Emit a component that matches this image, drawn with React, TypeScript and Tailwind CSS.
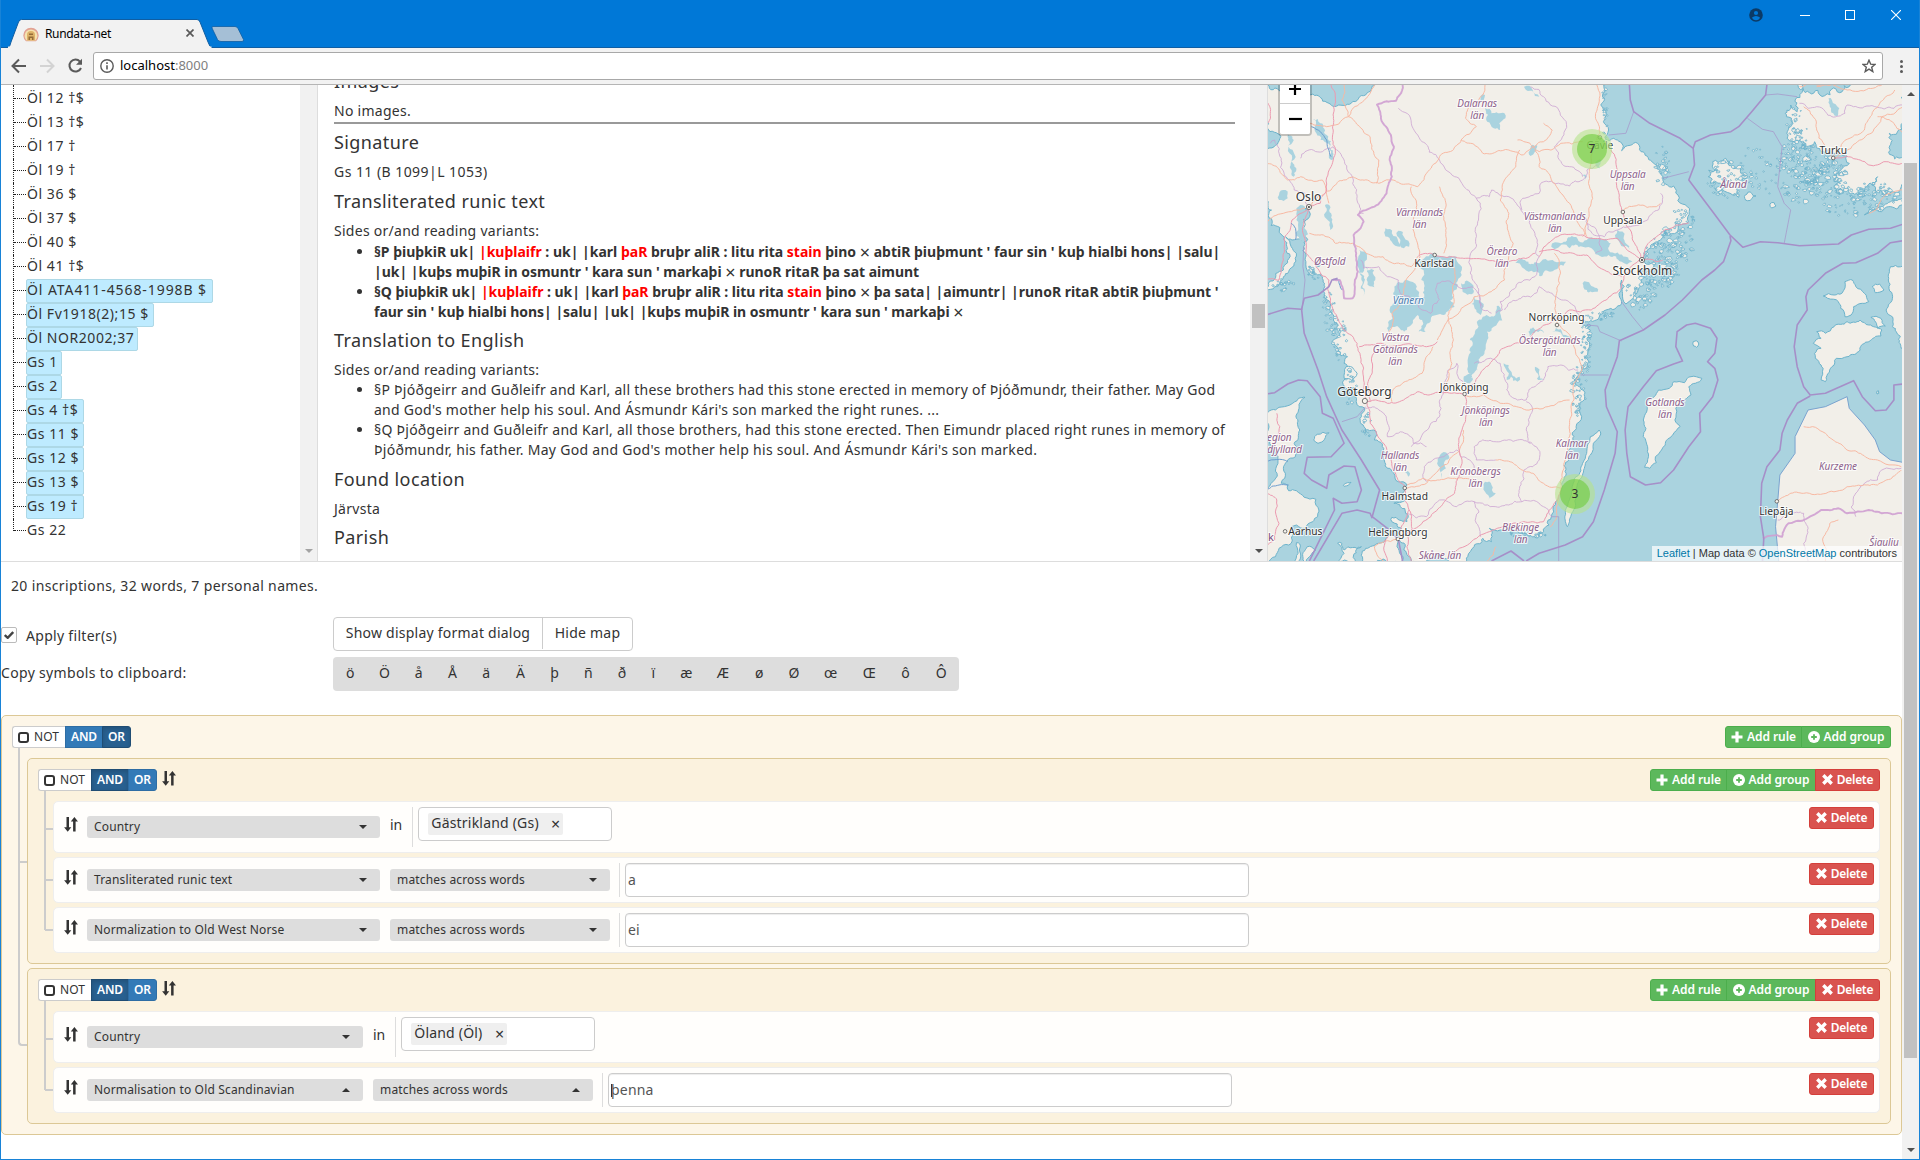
import React from "react";
import type { ReactNode } from "react";

/* ------------------------------------------------------------------ map */

type Pt = [number, number];

const mx = (x: number) => (x - 64.6) / 2.306;
const my = (y: number) => (y - 15) / 3;

const parse = (s: string): Pt[] =>
  s
    .trim()
    .split(/\s+/)
    .map((p) => {
      const [x, y] = p.split(",").map(Number);
      return [mx(x), my(y)] as Pt;
    });

const makeRandom = (seed: number) => {
  let s = seed;
  return () => {
    s = (s * 16807) % 2147483647;
    return s / 2147483647;
  };
};

// Midpoint displacement gives shorelines and roads their irregular course.
function rough(pts: Pt[], amp: number, rnd: () => number): Pt[] {
  const out: Pt[] = [];
  const split = (a: Pt, b: Pt) => {
    const dx = b[0] - a[0];
    const dy = b[1] - a[1];
    const len = Math.hypot(dx, dy);
    if (len < 3.2) {
      out.push(b);
      return;
    }
    const k = (rnd() - 0.5) * amp;
    const m: Pt = [(a[0] + b[0]) / 2 - dy * k, (a[1] + b[1]) / 2 + dx * k];
    split(a, m);
    split(m, b);
  };
  out.push(pts[0]);
  for (let i = 1; i < pts.length; i++) split(pts[i - 1], pts[i]);
  return out;
}

const toPath = (pts: Pt[], close = false) =>
  "M" + pts.map((p) => p[0].toFixed(1) + " " + p[1].toFixed(1)).join("L") + (close ? "Z" : "");

const shape = (s: string, amp: number, seed: number) => {
  const p = parse(s);
  return toPath(rough([...p, p[0]], amp, makeRandom(seed)), true);
};
const line = (s: string, amp: number, seed: number) => toPath(rough(parse(s), amp, makeRandom(seed)));

const land: [string, number][] = [
  // Scandinavian mainland
  ["60,10 833,10 838,40 832,75 845,100 838,125 850,150 843,178 862,175 878,186 880,212 900,196 917,190 925,215 950,245 968,272 975,300 990,320 1000,318 1010,345 1020,372 1036,395 1034,425 1012,432 1010,450 990,462 965,482 945,505 930,530 932,545 955,545 950,565 930,580 925,600 918,630 908,655 890,672 882,640 880,600 874,640 880,665 868,682 850,688 830,705 800,725 790,735 808,750 800,775 806,800 796,830 800,860 785,880 770,900 790,930 795,950 783,975 788,1010 775,1040 768,1080 762,1100 758,1140 752,1180 742,1225 735,1250 722,1280 718,1310 700,1355 690,1368 660,1360 640,1352 600,1350 575,1345 580,1385 560,1375 540,1400 525,1430 522,1450 392,1450 378,1410 365,1378 372,1345 350,1325 350,1312 385,1325 382,1300 370,1280 355,1270 380,1262 378,1235 385,1215 365,1205 355,1180 340,1165 330,1130 320,1085 310,1080 308,1050 290,1050 280,1010 288,985 268,965 275,935 245,925 240,900 262,875 240,850 248,830 225,810 212,785 228,750 215,720 208,680 196,650 195,610 190,590 160,580 152,545 147,500 148,455 152,420 160,395 150,385 140,400 138,450 142,480 120,480 105,470 118,500 130,520 125,550 112,575 100,590 92,610 80,620 60,628", 0.55],
  // Jutland
  ["60,1020 72,990 90,982 115,975 135,955 150,952 135,990 130,1015 138,1050 125,1090 128,1130 108,1145 100,1165 103,1195 95,1210 110,1215 112,1232 130,1232 148,1252 175,1258 182,1290 168,1325 150,1345 130,1335 118,1340 122,1362 112,1395 90,1405 82,1430 60,1450", 0.35],
  // Laeso, Anholt and the Danish isles
  ["170,1080 178,1063 205,1058 195,1078 180,1090", 0.3],
  ["238,1216 248,1208 256,1207 250,1216 240,1219", 0.2],
  ["225,1390 235,1390 240,1410 280,1400 262,1425 270,1450 225,1450 240,1420", 0.5],
  ["285,1450 290,1405 320,1390 345,1365 370,1370 362,1400 375,1450", 0.45],
  ["130,1388 138,1392 138,1440 128,1450 134,1420", 0.3],
  ["145,1440 155,1400 175,1410 160,1430 150,1450", 0.3],
  // Orust and Tjorn
  ["245,860 262,868 270,880 258,902 240,895", 0.4],
  // Oland
  ["828,1050 832,1062 815,1090 808,1125 795,1160 782,1200 775,1250 765,1300 755,1340 750,1320 756,1275 765,1230 775,1190 790,1150 800,1110 808,1070", 0.25],
  // Gotland
  ["1065,895 1050,910 1035,920 1040,945 1020,965 1005,985 1003,1020 1015,1040 998,1065 986,1078 972,1110 958,1130 960,1148 945,1165 933,1162 942,1130 940,1100 930,1070 936,1045 930,1020 938,970 955,950 965,930 990,925 1000,905 1025,908 1040,890", 0.3],
  ["1045,785 1052,782 1058,792 1053,802 1046,798", 0.3],
  // Finland
  ["1285,10 1280,60 1285,95 1270,75 1260,110 1275,130 1262,155 1275,185 1290,175 1305,200 1325,185 1340,215 1365,225 1400,228 1405,250 1385,270 1385,310 1370,325 1400,325 1425,345 1445,320 1470,290 1465,330 1485,350 1525,320 1540,310 1540,10", 0.7],
  ["1440,405 1470,385 1500,365 1530,350 1530,375 1495,380 1480,395", 0.4],
  // Aland
  ["1080,290 1095,270 1090,245 1115,250 1120,235 1135,260 1150,255 1155,280 1170,290 1165,320 1145,325 1150,352 1130,340 1105,330 1085,310", 0.9],
  ["1165,345 1180,340 1190,348 1170,362", 0.6],
  ["1222,372 1232,368 1236,378 1226,384", 0.4],
  // Estonian islands
  ["1345,648 1370,645 1388,640 1395,605 1412,600 1420,620 1440,640 1450,665 1435,670 1415,680 1412,700 1395,710 1385,685 1380,665 1355,655", 0.35],
  ["1458,620 1475,612 1485,630 1465,638", 0.3],
  ["1330,755 1350,760 1370,740 1400,725 1430,720 1450,735 1480,750 1478,768 1450,785 1430,810 1400,830 1375,835 1365,860 1350,905 1340,900 1345,865 1335,845 1325,820 1340,805 1322,790 1340,775", 0.4],
  ["1455,712 1478,715 1488,738 1470,745", 0.3],
  ["1540,540 1500,560 1495,600 1505,650 1490,690 1505,740 1525,805 1540,790", 0.4],
  ["1468,935 1472,932 1473,940 1469,942", 0.2],
];

const courland = "M1400 950 L1405 985 L1440 1035 L1465 1080 L1475 1115 L1500 1140 L1540 1150 L1540 1450 L1243 1450 L1235 1340 L1240 1265 L1245 1185 L1280 1120 L1280 1070 L1310 990 L1350 980 Z";

const lakes: string[] = [
  // Vanern
  "412,560 425,535 465,528 500,530 508,555 498,610 490,640 495,680 470,705 440,720 428,755 412,755 420,720 410,705 385,750 342,755 352,715 345,690 360,650 365,605 385,600 408,620 415,655 425,650 418,600",
  // Vattern
  "602,690 585,740 570,780 555,830 548,870 530,910 517,905 525,850 530,780 550,740 560,710 590,700 592,678",
  // Hjalmaren
  "635,548 665,545 690,550 710,542 752,545 735,560 715,575 690,588 672,572 650,562",
  // Malaren
  "718,500 740,490 765,468 800,480 830,475 855,490 850,510 890,530 905,545 880,545 850,525 830,528 815,510 790,500 760,505 725,508",
  // Siljan
  "565,85 580,100 610,100 612,115 598,130 600,150 585,145 570,125",
  "555,48 565,45 562,60 555,65",
  "670,205 685,195 680,215 670,228",
  // Mjosa and neighbours
  "168,118 185,130 200,165 208,205 210,240 205,225 195,185 172,150",
  "108,160 120,190 122,250 130,270 124,290 117,250 112,200",
  "90,345 105,330 110,355 90,360",
  "196,375 210,400 208,450 202,420",
  "335,445 350,460 365,485 370,500 350,485",
  "365,452 378,470 390,500 378,505 370,480",
  "275,510 288,560 280,600 284,650 275,580",
  "288,560 312,600 310,622 296,580",
  "130,385 150,380 145,420 138,480 130,420",
  "548,660 555,705 545,690 540,650",
  "510,610 535,612 538,640 520,640",
  "608,850 622,870 645,890 640,905 625,890 615,900",
  "680,860 690,885 700,900 685,895",
  "465,1120 482,1128 475,1165 465,1195 460,1170",
  "565,1205 580,1215 590,1240 572,1260 565,1235",
  "790,610 800,605 815,620 825,635 800,630 792,622",
  "665,755 690,748 700,760 668,768",
  "720,755 740,748 780,775 765,778",
  "790,285 800,290 792,315",
  "655,20 675,30 690,50 680,48",
  "820,255 835,240 830,265",
  "870,450 885,470 900,510 885,500 872,480",
  "1357,55 1365,60 1382,85 1378,108 1368,100 1360,80",
  "380,1175 392,1180 388,1190",
];

const borders = [
  "375,15 368,45 360,62 316,74 325,115 348,165 355,200 345,240 350,290 338,340 310,380 283,392 272,405 285,425 278,445 262,465 268,520 272,575 265,600 260,655 240,655 230,600 215,598",
];

const seaBorders = [
  "898,15 900,60 908,95 945,130 1015,175 1045,205 1048,255 1035,300 1090,395 1130,465 1160,502 1200,485 1240,488 1290,497 1380,492 1410,465 1450,448 1500,445 1530,432",
  "1215,15 1212,45 1180,95 1150,140 1132,155 1085,165 1050,185 1045,205",
  "1130,468 1132,482 1115,545 1095,570 1065,600 1020,660 980,705 930,750 875,782 870,830 842,930 845,980 870,1055 865,1120 840,1230 815,1325 790,1370 750,1395 690,1420 660,1443",
  "1530,482 1500,488 1470,520 1420,548 1390,550 1350,580 1310,630 1305,650 1308,690 1285,735 1278,800 1285,860 1300,920 1315,945 1350,940 1415,902 1435,950 1465,992 1490,990 1508,960 1508,915 1530,912",
  "1315,948 1285,970 1262,1020 1250,1060 1245,1110 1215,1160 1203,1210 1200,1310 1208,1375 1205,1443",
  "1020,842 1005,800 1008,755 1030,735 1050,730 1085,745 1100,775 1095,820 1078,845 1095,865 1102,900 1090,950 1060,1000 1062,1055 1035,1100 1000,1170 970,1208 935,1215 900,1190 892,1120 888,1050 895,980 930,920 960,872 1000,852 1022,842",
  "60,705 110,685 142,688 148,655 180,645 205,620 212,600 225,595",
  "142,688 148,760 180,870 200,950 235,1050 280,1140 322,1230 305,1310 340,1345 365,1378 375,1443",
  "60,942 80,938 110,912 135,900 155,902 185,950 190,1000 215,1015 240,1090 210,1130 155,1132 148,1180 165,1200 200,1225 205,1185 240,1158 265,1160 280,1230 270,1265 235,1270 215,1255 218,1290 180,1390 160,1443",
  "170,1443 235,1300 270,1290 300,1300 305,1315",
  "580,1443 625,1413 655,1443",
];

const thinSea = [
  "908,95 890,160 850,165",
  "1035,275 990,290 975,295",
  "1170,115 1205,148 1230,155 1250,200 1240,320 1255,370 1270,390 1255,490",
  "1212,45 1240,42 1285,50",
  "880,665 905,710 930,750",
  "800,735 825,738 830,755 880,783",
  "785,885 850,885",
  "235,1025 270,1010 290,980",
  "735,1443 735,1310 718,1310",
  "147,500 145,560 150,600 143,690",
];

const admin = [
  "365,85 395,130 420,185 460,240 495,290 505,295 520,325 545,355 575,350 580,330 620,350 650,395 660,410 670,435 680,460 682,515 690,530 685,560 680,590 655,600 640,610 620,650 600,665 605,690 590,700",
  "545,355 550,420 545,500 530,530 535,595 550,640 560,690 580,700",
  "650,390 652,355 690,340 695,308 740,312 760,318 790,300 800,270 825,255",
  "670,20 700,50 735,90 750,150 725,200 760,260 790,290",
  "70,190 80,180 95,235 125,330 150,340 160,395",
  "140,235 150,215 190,215 215,200 240,240 260,310 270,350 275,400 285,400",
  "970,340 965,390 940,420 920,435 900,440 870,450 850,455 840,470 812,460 800,430 780,400",
  "800,430 830,480 835,510 820,520",
  "455,610 440,700 420,690 395,655 370,640 365,600 340,590 320,560 285,565 278,540",
  "455,610 500,615 535,620 560,680",
  "610,690 640,660 690,620 720,640 750,660 775,690 780,720",
  "515,905 500,850 480,870 470,910 460,1010 440,1030 415,1080 395,1100",
  "290,985 320,990 340,1070 380,1060 400,1090 430,1100",
  "540,850 600,850 610,895 615,930 640,960 660,960 700,900 710,860 740,855 780,870",
  "660,965 675,990 660,1050 670,1090 640,1080 600,1085 540,1100 545,1140 590,1140",
  "670,1085 690,1140 655,1170 645,1220 650,1265 620,1275 590,1280 540,1265 500,1280 460,1260 430,1310 385,1300",
  "430,1205 425,1160 470,1130 500,1110 530,1140 540,1165",
  "650,1265 700,1280 720,1310",
  "540,1265 545,1330 555,1370",
  "1290,70 1310,85 1330,80 1350,95 1365,110 1395,100 1400,75 1440,80 1530,75",
  "1240,1320 1300,1300 1310,1345 1300,1390 1310,1443",
  "1420,1310 1415,1250 1440,1210 1470,1200 1480,1170 1525,1165",
];

const nation = [
  "1205,1375 1250,1370 1265,1330 1300,1320 1340,1290 1380,1285 1400,1300 1450,1290 1480,1300 1530,1300",
];

const pinkRoads = [
  "210,15 220,60 215,150 210,260 200,330 185,370 160,385 148,420 152,520 175,560 205,600 215,690 240,750 270,790 278,830 285,900 290,960 300,1030 325,1080 350,1150 380,1220 390,1290 370,1370",
  "60,60 70,100 60,140",
  "60,600 90,600 100,540 120,420 158,385",
  "285,965 340,970 410,935 470,938 518,945 560,870 600,810 665,780 715,730 760,690 810,690 845,660 875,630 885,590 920,540",
  "518,945 512,1050 512,1150 495,1240 440,1310 370,1370",
  "855,210 870,270 880,390 900,450 915,500 925,540",
  "690,530 720,480 790,465 870,475 905,520 925,540",
  "690,515 740,518 800,525 840,570 880,590",
  "410,530 440,520 490,530 520,535 570,540 620,545 680,520",
  "925,540 960,470 1005,435 1035,428",
  "925,540 960,545 975,540",
  "455,785 430,800 300,795 275,800",
  "300,965 305,870 310,800",
  "390,1290 385,1400 395,1443",
  "490,1430 530,1390 575,1355 640,1330 700,1325 740,1240",
  "1367,235 1430,240 1450,255 1490,245 1530,250",
  "60,1240 85,1260 90,1330 80,1380 60,1400",
  "85,1000 85,1080 60,1120",
  "340,1443 335,1380 345,1360",
];

const orangeRoads = [
  "160,385 210,330 260,290 320,310 345,300 410,320 460,230 510,180 545,140 520,115",
  "120,60 130,100 200,140 250,110 300,40 310,15",
  "240,15 235,60 250,110 300,170 320,240 315,310",
  "60,250 110,300 140,290 190,300 205,370",
  "395,320 400,420 415,530 405,560 380,620 350,700 340,780",
  "460,320 470,420 470,520",
  "520,115 560,45 565,15",
  "510,180 560,220 620,210 650,225 700,185 720,150 700,130",
  "640,180 690,215 740,190 790,185",
  "680,210 690,260 730,320 760,370 780,430 800,470",
  "645,210 610,300 600,360 620,400 630,490 610,600 540,650 480,720 455,780",
  "823,15 825,80 830,160 815,200 805,280 812,340 805,400 790,470",
  "725,520 730,640 732,730 770,800 790,860 770,910 770,960 760,1050 755,1130 740,1230 730,1300 715,1340",
  "518,945 600,970 660,990 760,960",
  "485,540 490,620 480,720 490,800 480,900 475,940",
  "350,965 360,920 420,880 445,800",
  "385,1215 460,1200 540,1200",
  "590,1140 650,1170 700,1210 740,1225",
  "515,1050 480,1150 430,1210 385,1225",
  "160,460 220,490 260,490 330,530 395,560 410,530",
  "60,430 100,400 150,385",
  "880,395 960,380 970,370",
  "1290,20 1340,15",
  "1330,20 1400,30 1450,25 1480,15",
  "1300,80 1330,150 1367,235 1420,190 1480,110 1530,80",
  "1367,235 1440,150 1510,30",
  "1470,110 1530,160",
  "1450,400 1530,330",
  "1300,1040 1350,1060 1400,1110 1470,1140 1525,1160",
  "1238,1265 1300,1240 1400,1220 1470,1215 1525,1170",
  "1350,1443 1360,1330 1380,1320",
  "590,1400 570,1443",
  "330,1443 310,1400 360,1378",
];

const riverLines = [
  "215,600 228,600 236,630",
  "118,430 128,445 128,480",
  "60,1145 110,1145",
  "60,1230 90,1215 112,1215",
  "165,140 200,180 210,230",
];

// x, y, radius x, radius y, number of islets, largest islet
const archipelagos: [number, number, number, number, number, number][] = [
  [975, 550, 48, 80, 90, 2.6],
  [1000, 500, 45, 60, 50, 2.2],
  [925, 630, 35, 60, 50, 2.2],
  [1125, 295, 50, 60, 60, 2.2],
  [1290, 270, 50, 100, 110, 2.4],
  [1350, 290, 55, 60, 90, 2.8],
  [1400, 360, 60, 50, 50, 2],
  [1200, 270, 50, 80, 36, 1.4],
  [1465, 350, 50, 45, 55, 2.2],
  [1285, 170, 25, 90, 50, 2.2],
  [1020, 420, 25, 40, 30, 1.6],
  [975, 260, 20, 60, 25, 2],
  [205, 690, 16, 70, 26, 1.4],
  [230, 780, 16, 70, 32, 1.6],
  [254, 920, 16, 60, 28, 1.4],
  [295, 1040, 14, 40, 15, 1.4],
  [798, 800, 12, 90, 40, 1.5],
  [782, 930, 18, 80, 42, 1.6],
  [830, 705, 34, 16, 20, 1.5],
  [665, 1362, 46, 9, 22, 1.3],
  [95, 615, 35, 20, 20, 1.6],
  [175, 575, 20, 25, 20, 1.4],
  [842, 100, 7, 90, 24, 1.1],
];

const islets = (() => {
  const rnd = makeRandom(4177);
  let d = "";
  for (const [cx, cy, rx, ry, n, size] of archipelagos) {
    for (let i = 0; i < n; i++) {
      const a = rnd() * Math.PI * 2;
      const r = Math.sqrt(rnd());
      const x = mx(cx + Math.cos(a) * rx * r);
      const y = my(cy + Math.sin(a) * ry * r);
      const s = 0.5 + rnd() * rnd() * size;
      const tilt = rnd() * 1.6 - 0.8;
      const pts: Pt[] = [];
      for (let k = 0; k < 6; k++) {
        const t = (k / 6) * Math.PI * 2 + tilt;
        const q = s * (0.6 + rnd() * 0.8);
        pts.push([x + Math.cos(t) * q * 1.3, y + Math.sin(t) * q]);
      }
      d += toPath(pts, true);
    }
  }
  return d;
})();

type Label = { x: number; y: number; t: string[]; s: number; kind: "area" | "city" | "water" };
const labels: Label[] = [
  { x: 547, y: 69, t: ["Dalarnas", "län"], s: 10, kind: "area" },
  { x: 894, y: 283, t: ["Uppsala", "län"], s: 10, kind: "area" },
  { x: 414, y: 398, t: ["Värmlands", "län"], s: 10, kind: "area" },
  { x: 726, y: 408, t: ["Västmanlands", "län"], s: 10, kind: "area" },
  { x: 604, y: 514, t: ["Örebro", "län"], s: 10, kind: "area" },
  { x: 207, y: 543, t: ["Østfold"], s: 10, kind: "area" },
  { x: 358, y: 772, t: ["Västra", "Götalands", "län"], s: 10, kind: "area" },
  { x: 714, y: 780, t: ["Östergötlands", "län"], s: 10, kind: "area" },
  { x: 567, y: 990, t: ["Jönköpings", "län"], s: 10, kind: "area" },
  { x: 980, y: 966, t: ["Gotlands", "län"], s: 10, kind: "area" },
  { x: 765, y: 1090, t: ["Kalmar", "län"], s: 10, kind: "area" },
  { x: 369, y: 1127, t: ["Hallands", "län"], s: 10, kind: "area" },
  { x: 543, y: 1175, t: ["Kronobergs", "län"], s: 10, kind: "area" },
  { x: 647, y: 1343, t: ["Blekinge", "län"], s: 10, kind: "area" },
  { x: 461, y: 1426, t: ["Skåne län"], s: 10, kind: "area" },
  { x: 1138, y: 314, t: ["Åland"], s: 10.5, kind: "area" },
  { x: 1379, y: 1158, t: ["Kurzeme"], s: 10, kind: "area" },
  { x: 1485, y: 1388, t: ["Šiauliu"], s: 10, kind: "area" },
  { x: 84, y: 1072, t: ["Region"], s: 10, kind: "area" },
  { x: 84, y: 1108, t: ["Nordjylland"], s: 10, kind: "area" },
  { x: 388, y: 660, t: ["Vänern"], s: 10, kind: "water" },
  { x: 158, y: 350, t: ["Oslo"], s: 12, kind: "city" },
  { x: 448, y: 549, t: ["Karlstad"], s: 10.2, kind: "city" },
  { x: 883, y: 420, t: ["Uppsala"], s: 10.2, kind: "city" },
  { x: 928, y: 572, t: ["Stockholm"], s: 12, kind: "city" },
  { x: 730, y: 712, t: ["Norrköping"], s: 10.2, kind: "city" },
  { x: 287, y: 935, t: ["Göteborg"], s: 12, kind: "city" },
  { x: 517, y: 921, t: ["Jönköping"], s: 10.2, kind: "city" },
  { x: 380, y: 1248, t: ["Halmstad"], s: 10.2, kind: "city" },
  { x: 364, y: 1356, t: ["Helsingborg"], s: 10.2, kind: "city" },
  { x: 151, y: 1353, t: ["Aarhus"], s: 10.2, kind: "city" },
  { x: 1368, y: 210, t: ["Turku"], s: 10.2, kind: "city" },
  { x: 1237, y: 1294, t: ["Liepāja"], s: 10.2, kind: "city" },
  { x: 830, y: 195, t: ["Gävle"], s: 10.2, kind: "city" },
];
const labelColor = { area: "#8d618b", city: "#333333", water: "#4d80b3" };

const towns: [number, number, number][] = [
  [159, 381, 2.6], [927, 540, 2.6], [288, 963, 2.6], [449, 525, 1.8], [883, 396, 1.8], [731, 735, 1.8],
  [518, 942, 1.8], [380, 1224, 1.8], [364, 1377, 1.8], [104, 1354, 1.8], [1368, 234, 1.8], [1238, 1264, 1.8], [830, 172, 1.8],
];

function MapDrawing() {
  return (
    <svg width="634" height="476" viewBox="0 0 634 476" className="block font-['Noto_Sans',sans-serif]">
      <rect width="634" height="476" fill="#aad3df" />
      <g fill="#f2efe9" stroke="#6db3cb" strokeWidth="1" strokeLinejoin="round">
        {land.map(([s, a], i) => (
          <path key={i} d={shape(s, a, 91 + i * 7)} />
        ))}
        <g transform="scale(.43365 .33333) translate(-64.6 -15)">
          <path d={courland} vectorEffect="non-scaling-stroke" stroke="#7aa3cf" />
        </g>
        <path d={islets} strokeWidth=".8" />
      </g>
      <g fill="#aad3df">
        {lakes.map((s, i) => (
          <path key={i} d={shape(s, 0.6, 311 + i * 13)} />
        ))}
      </g>
      <path d={shape("545,870 548,865 540,890 533,895", 0.2, 8)} fill="#f2efe9" />
      <g fill="none" stroke="#c99fd0" strokeOpacity=".75" strokeWidth="1">
        {admin.map((s, i) => (
          <path key={i} d={line(s, 0.35, 51 + i * 3)} />
        ))}
      </g>
      <g fill="none" stroke="#f8b9a3" strokeWidth="1">
        {orangeRoads.map((s, i) => (
          <path key={i} d={line(s, 0.25, 17 + i * 5)} />
        ))}
      </g>
      <g fill="none" stroke="#ec9ab0" strokeWidth="1">
        {pinkRoads.map((s, i) => (
          <path key={i} d={line(s, 0.22, 29 + i * 5)} />
        ))}
      </g>
      <g fill="none" stroke="#6d9ecf" strokeWidth="1">
        {riverLines.map((s, i) => (
          <path key={i} d={line(s, 0.2, 37 + i * 5)} />
        ))}
      </g>
      <g fill="none" stroke="#cf9fd1" strokeOpacity=".9" strokeWidth="1.9" strokeLinejoin="round">
        {borders.concat(nation).map((s, i) => (
          <path key={i} d={line(s, 0.2, 61 + i)} />
        ))}
      </g>
      <g fill="none" stroke="#a68fc8" strokeWidth="1.6" strokeLinejoin="round">
        {seaBorders.map((s, i) => (
          <path key={i} d={toPath(parse(s))} />
        ))}
      </g>
      <g fill="none" stroke="#a68fc8" strokeOpacity=".75" strokeWidth=".9">
        {thinSea.map((s, i) => (
          <path key={i} d={toPath(parse(s))} />
        ))}
      </g>
      <g fill="#f6f4ee" stroke="#555" strokeWidth=".8">
        {towns.map(([x, y, r], i) => (
          <circle key={i} cx={mx(x)} cy={my(y)} r={r} />
        ))}
      </g>
      <g fill="#444">
        <circle cx={mx(159)} cy={my(381)} r="1.1" />
        <circle cx={mx(927)} cy={my(540)} r="1.1" />
      </g>
      <g textAnchor="middle" stroke="#ffffff" strokeOpacity=".75" strokeWidth="2.2" strokeLinejoin="round">
        {labels.map((l) =>
          l.t.map((t, i) => (
            <text
              key={t + l.x + i}
              x={mx(l.x)}
              y={my(l.y) + i * 12 + l.s * 0.35}
              fontSize={l.s}
              fontStyle={l.kind === "city" ? "normal" : "italic"}
              fill={labelColor[l.kind]}
              paintOrder="stroke"
              letterSpacing={l.kind === "city" ? 0.05 : -0.08}
            >
              {t}
            </text>
          )),
        )}
        <text x="3" y={my(1370) + 4} fontSize="11" fill="#7a4c7c" paintOrder="stroke">
          k
        </text>
      </g>
    </svg>
  );
}

function Cluster({ n, className }: { n: number; className: string }) {
  return (
    <div className={`absolute flex size-10 items-center justify-center rounded-full bg-[#b5e28c]/60 ${className}`}>
      <div className="flex size-[30px] items-center justify-center rounded-full bg-[#6ecc39]/60 text-[12px] text-[#333]">{n}</div>
    </div>
  );
}

function MapPanel() {
  return (
    <div className="relative h-[476px] w-[634px] overflow-hidden">
      <MapDrawing />
      <div className="absolute -top-[14px] left-[10px] w-[34px] rounded-[4px] border-2 border-black/20 bg-clip-padding">
        <div className="flex h-[31px] items-center justify-center border-b border-[#ccc] bg-white">
          <svg width="12" height="12" viewBox="0 0 12 12" className="mt-[2px]">
            <path d="M0 6H12M6 0V12" stroke="#000" strokeWidth="2.2" />
          </svg>
        </div>
        <div className="flex h-[30px] items-center justify-center rounded-b-[2px] bg-white">
          <svg width="13" height="12" viewBox="0 0 13 12">
            <path d="M0 6H13" stroke="#000" strokeWidth="2.2" />
          </svg>
        </div>
      </div>
      <Cluster n={7} className="left-[304px] top-[44px]" />
      <Cluster n={3} className="left-[287px] top-[389px]" />
      <div className="absolute bottom-0 right-0 whitespace-nowrap bg-white/70 px-[5px] font-['Liberation_Sans',sans-serif] text-[11px] leading-[15px] text-[#333]">
        <span className="text-[#0078a8]">Leaflet</span> | Map data © <span className="text-[#0078a8]">OpenStreetMap</span> contributors
      </div>
    </div>
  );
}

/* ------------------------------------------------------------- browser */

function TitleBar() {
  return (
    <div className="flex h-[48px] shrink-0 items-end justify-between border-b border-[#0f5ea3] bg-[#0078d7]">
      <div className="relative flex h-[28px] w-[250px] items-center pl-[23px] pt-px">
        <svg width="250" height="29" viewBox="0 0 250 29" className="absolute left-0 top-0">
          <path d="M6 29 C9 28 9 26 10 23 L17.500 3 Q18.500 0.500 20.500 0.500 H196 Q198 0.500 199 3 L207 23 Q209 28.500 211 29 Z" fill="#f2f2f2" stroke="#0f5ea3" strokeWidth="1" />
          <path d="M7 28.500H210.500" stroke="#f2f2f2" strokeWidth="2" />
          <path d="M212 7.500 H234 Q236 7.500 237 9.500 L242.500 20.500 Q243 22.500 241 22.500 H220 Q217.500 22.500 216.500 20.500 L211 9 Q210.500 7.500 212 7.500Z" fill="#a5bfd6" stroke="#0f5ea3" strokeWidth=".8" />
        </svg>
        <svg width="16" height="16" viewBox="0 0 16 16" className="relative -ml-px">
          <path d="M3 15.200A7.700 7.700 0 1 1 13 15.200Z" fill="#e2a294" />
          <path d="M3.600 14.500A6.400 6.400 0 1 1 12.400 14.500Z" fill="#f5e2ae" />
          <path d="M4 14.500V9a4 4 0 0 1 8 0V14.500Z" fill="#ddb268" />
          <path d="M6 9H10V7.500H6ZM5.500 10.500H10.500V14H9V12H7V14H5.500Z" fill="#946c38" />
        </svg>
        <span className="relative ml-[6px] text-[12px] tracking-[-0.35px] text-black">Rundata-net</span>
        <svg width="8" height="8" viewBox="0 0 8 8" className="absolute left-[185px] top-[10px]">
          <path d="M.500 .500L7.500 7.500M7.500 .500L.500 7.500" stroke="#5a5a5a" strokeWidth="1.700" />
        </svg>
      </div>
      <div className="mb-[18px] flex h-[28px] items-center">
        <svg width="14" height="14" viewBox="0 0 14 14" className="mr-[37px]">
          <circle cx="7" cy="7" r="6.800" fill="#0b3a66" />
          <circle cx="7" cy="5" r="2.100" fill="#0078d7" />
          <path d="M2.800 9.800Q7 6.200 11.200 9.800Q9.500 12.300 7 12.300T2.800 9.800Z" fill="#0078d7" />
        </svg>
        <span className="mr-[35px] h-px w-[10px] bg-white" />
        <span className="mr-[36px] size-[10px] border border-white" />
        <svg width="10" height="10" viewBox="0 0 10 10" className="mr-[18px]">
          <path d="M0 0L10 10M10 0L0 10" stroke="#fff" strokeWidth="1.100" />
        </svg>
      </div>
    </div>
  );
}

function Toolbar() {
  return (
    <div className="flex h-[37px] shrink-0 items-center border-b border-[#b5b5b5] bg-[#f2f2f2]">
      <svg width="92" height="36" viewBox="0 0 92 36" fill="none" className="shrink-0">
        <path d="M25 18H12M18 11.500L11.500 18L18 24.500" stroke="#5a5a5a" strokeWidth="2" />
        <path d="M39 18H52M46 11.500L52.500 18L46 24.500" stroke="#d3d3d3" strokeWidth="2" />
        <path d="M79 13.600A6 6 0 1 0 80 20" stroke="#5a5a5a" strokeWidth="2" />
        <path d="M81 10.800V16.800H75Z" fill="#5a5a5a" />
      </svg>
      <div className="flex h-[28px] w-[1790px] items-center rounded-[3px] border border-[#a8a8a8] bg-white pl-[6px] pr-[6px]">
        <svg width="14" height="14" viewBox="0 0 14 14" fill="none">
          <circle cx="7" cy="7" r="6.200" stroke="#5a5a5a" strokeWidth="1.400" />
          <path d="M7 6.200V10.500M7 3.300V4.900" stroke="#5a5a5a" strokeWidth="1.600" />
        </svg>
        <span className="ml-[6px] grow text-[13px] text-black">
          localhost<span className="text-[#808080]">:8000</span>
        </span>
        <svg width="14" height="14" viewBox="0 0 14 14" fill="none">
          <path d="M7 1.200L8.700 5.200L13 5.500L9.700 8.300L10.800 12.600L7 10.200L3.200 12.600L4.300 8.300L1 5.500L5.300 5.200Z" stroke="#5a5a5a" strokeWidth="1.400" />
        </svg>
      </div>
      <div className="ml-[17px] flex flex-col gap-[2px]">
        <span className="size-[3px] rounded-full bg-[#5a5a5a]" />
        <span className="size-[3px] rounded-full bg-[#5a5a5a]" />
        <span className="size-[3px] rounded-full bg-[#5a5a5a]" />
      </div>
    </div>
  );
}

function Arrow({ up = false, color = "#505050" }: { up?: boolean; color?: string }) {
  return (
    <svg width="8" height="4" viewBox="0 0 8 4" fill={color}>
      <path d={up ? "M0 4L4 0L8 4Z" : "M0 0L4 4L8 0Z"} />
    </svg>
  );
}

/* ------------------------------------------------------------- panels */

const tree: { t: string; on?: boolean; cls?: string }[] = [
  { t: "Öl 12 †$" },
  { t: "Öl 13 †$" },
  { t: "Öl 17 †" },
  { t: "Öl 19 †" },
  { t: "Öl 36 $" },
  { t: "Öl 37 $" },
  { t: "Öl 40 $" },
  { t: "Öl 41 †$" },
  { t: "Öl ATA411-4568-1998B $", on: true, cls: "w-[187px] tracking-[0.92px]" },
  { t: "Öl Fv1918(2);15 $", on: true, cls: "w-[128px]" },
  { t: "Öl NOR2002;37", on: true, cls: "w-[112px]" },
  { t: "Gs 1", on: true, cls: "w-[36px]" },
  { t: "Gs 2", on: true, cls: "w-[36px]" },
  { t: "Gs 4 †$", on: true, cls: "w-[58px]" },
  { t: "Gs 11 $", on: true, cls: "w-[58px]" },
  { t: "Gs 12 $", on: true, cls: "w-[58px]" },
  { t: "Gs 13 $", on: true, cls: "w-[58px]" },
  { t: "Gs 19 †", on: true, cls: "w-[58px]" },
  { t: "Gs 22" },
];

function TreePanel() {
  return (
    <div className="flex w-[317px] border-r border-[#ddd]">
      <div className="grow pl-[12px] pt-[2px]">
        {tree.map((n, i) => (
          <div key={n.t} className="flex h-[24px]">
            <div className={`w-px border-l border-dotted border-[#222] ${i === tree.length - 1 ? "h-[12px]" : i === 0 ? "-mt-[2px] h-[26px]" : "h-[24px]"}`} />
            <div className="h-[12px] w-[12px] border-b border-dotted border-[#222]" />
            <div
              className={`h-[24px] whitespace-nowrap border text-[14px] leading-[20px] ${n.cls ?? ""} ${
                n.cls?.includes("tracking") ? "" : "tracking-[0.55px]"
              } ${n.on ? "rounded-[2px] border-[#add8e6] bg-[#beebff]" : "border-transparent"}`}
            >
              {n.t}
            </div>
          </div>
        ))}
      </div>
      <div className="flex w-[17px] items-end justify-center bg-[#f1f1f1] pb-[8px]">
        <Arrow color="#a3a3a3" />
      </div>
    </div>
  );
}

const H = ({ children }: { children: ReactNode }) => (
  <h4 className="my-[10px] text-[18px] leading-[19px] tracking-[0.39px]">{children}</h4>
);
const Red = ({ children }: { children: ReactNode }) => <span className="text-[#f00]">{children}</span>;
const X = () => <span className="relative top-[2px] text-[18px] font-normal leading-none">×</span>;

function InfoPanel() {
  return (
    <div className="flex w-[950px] border-r border-[#ddd]">
      <div className="w-[932px] whitespace-nowrap pl-[16px] text-[14px] leading-[20px] tracking-[0.27px]">
        <h4 className="-mt-[13px] mb-[9px] text-[18px] leading-[19.8px] tracking-[0.39px]">Images</h4>
        <div>No images.</div>
        <div className="mt-px h-[2px] w-[901px] bg-[#999]" />
        <h4 className="mb-[10px] mt-[9px] text-[18px] leading-[19px] tracking-[0.39px]">Signature</h4>
        <div className="tracking-[0.45px]">Gs 11 (B 1099|L 1053)</div>
        <H>Transliterated runic text</H>
        <div>Sides or/and reading variants:</div>
        <ul className="mb-[10px] list-disc pl-[40px] font-bold">
          <li className="h-[40px]">
            <div className="h-[20px] tracking-[0px]">
              §P þiuþkiR uk| <Red>|kuþlaifr</Red> : uk| |karl <Red>þaR</Red> bruþr aliR : litu rita <Red>stain</Red> þino <X /> abtiR þiuþmunt ' faur sin ' kuþ hialbi
              hons| |salu|
            </div>
            <div className="h-[20px] tracking-[-0.01px]">
              |uk| |kuþs muþiR in osmuntr ' kara sun ' markaþi <X /> runoR ritaR þa sat aimunt
            </div>
          </li>
          <li className="h-[40px]">
            <div className="h-[20px] tracking-[-0.03px]">
              §Q þiuþkiR uk| <Red>|kuþlaifr</Red> : uk| |karl <Red>þaR</Red> bruþr aliR : litu rita <Red>stain</Red> þino <X /> þa sata| |aimuntr| |runoR ritaR abtiR
              þiuþmunt '
            </div>
            <div className="h-[20px] tracking-[-0.03px]">
              faur sin ' kuþ hialbi hons| |salu| |uk| |kuþs muþiR in osmuntr ' kara sun ' markaþi <X />
            </div>
          </li>
        </ul>
        <H>Translation to English</H>
        <div>Sides or/and reading variants:</div>
        <ul className="mb-[10px] list-disc pl-[40px]">
          <li>
            <span className="tracking-[0.26px]">
              §P Þjóðgeirr and Guðleifr and Karl, all these brothers had this stone erected in memory of Þjóðmundr, their father. May God
            </span>
            <br />
            and God's mother help his soul. And Ásmundr Kári's son marked the right runes. ...
          </li>
          <li>
            <span className="tracking-[0.26px]">
              §Q Þjóðgeirr and Guðleifr and Karl, all those brothers, had this stone erected. Then Eimundr placed right runes in memory of
            </span>
            <br />
            <span className="tracking-[0.3px]">Þjóðmundr, his father. May God and God's mother help his soul. And Ásmundr Kári's son marked.</span>
          </li>
        </ul>
        <H>Found location</H>
        <div>Järvsta</div>
        <h4 className="mt-[9px] text-[18px] leading-[19px] tracking-[0.39px]">Parish</h4>
      </div>
      <div className="flex w-[17px] flex-col items-center justify-between bg-[#f1f1f1] pb-[8px]">
        <div className="mt-[219px] h-[24px] w-[13px] bg-[#c1c1c1]" />
        <Arrow />
      </div>
    </div>
  );
}

/* ------------------------------------------------------- query builder */

const SortIcon = () => (
  <svg width="14" height="15" viewBox="0 0 14 15" fill="#333">
    <path d="M2.500 0H5V10.300H7.300L3.700 14.800L.100 10.300H2.500ZM9.100 14.500V4.500H6.800L10.400 0L14 4.500H11.600V14.500Z" />
  </svg>
);
const Cross = () => (
  <svg width="11" height="11" viewBox="0 0 11 11">
    <path d="M1.300 1.300L9.700 9.700M9.700 1.300L1.300 9.700" stroke="#fff" strokeWidth="3.400" />
  </svg>
);
const Plus = () => (
  <svg width="12" height="12" viewBox="0 0 12 12">
    <path d="M6 0.500V11.500M0.500 6H11.500" stroke="#fff" strokeWidth="3.200" />
  </svg>
);
const PlusCircle = () => (
  <svg width="12" height="12" viewBox="0 0 12 12">
    <circle cx="6" cy="6" r="6" fill="#fff" />
    <path d="M6 3.200V8.800M3.200 6H8.800" stroke="#5cb85c" strokeWidth="1.800" />
  </svg>
);

const Delete = ({ className = "w-[65px] rounded-[3px]" }: { className?: string }) => (
  <button className={`flex h-[22px] items-center justify-center gap-[4px] border border-[#d43f3a] bg-[#d9534f] pb-px text-[12px] font-semibold text-white ${className}`}>
    <Cross />
    <span className="tracking-[-0.3px]">Delete</span>
  </button>
);

function GroupHead({ active, sub }: { active: "AND" | "OR"; sub?: boolean }) {
  const cond = "flex h-full items-center justify-center border font-semibold tracking-[-0.1px] text-white pb-px";
  const on = "border-[#204d74] bg-[#286090] shadow-[inset_0_2px_4px_rgba(0,0,0,.15)]";
  const off = "border-[#2e6da4] bg-[#337ab7]";
  const add = "flex items-center justify-center gap-[4px] border border-[#4cae4c] bg-[#5cb85c] pb-px text-white font-semibold tracking-[-0.05px]";
  return (
    <div className="flex h-[22px] items-center text-[12px]">
      <div className="flex h-[22px]">
        <div className="flex w-[53px] items-center justify-center gap-[5px] rounded-l-[3px] border border-r-0 border-[#ccc] bg-white pb-px pr-px">
          <span className="mt-px h-[11px] w-[11px] rounded-[3px] border-2 border-[#333]" />
          NOT
        </div>
        <div className={`w-[38px] ${cond} ${active === "AND" ? on : off}`}>AND</div>
        <div className={`-ml-px w-[29px] rounded-r-[3px] ${cond} ${active === "OR" ? on : off}`}>OR</div>
      </div>
      {sub && (
        <div className="mb-[3px] ml-[5px]">
          <SortIcon />
        </div>
      )}
      <div className="ml-auto flex h-[22px]">
        <div className={`w-[77px] rounded-l-[3px] ${add}`}>
          <Plus />
          Add rule
        </div>
        <div className={`-ml-px w-[90px] ${add} ${sub ? "" : "rounded-r-[3px]"}`}>
          <PlusCircle />
          Add group
        </div>
        {sub && <Delete className="-ml-px w-[65px] rounded-r-[3px]" />}
      </div>
    </div>
  );
}

function Select({ text, up, className }: { text: string; up?: boolean; className: string }) {
  return (
    <div className={`flex h-[22px] items-center justify-between rounded-[3px] bg-[#ddd] pl-[7px] pr-[13px] text-[12px] tracking-[0.16px] ${className}`}>
      {text}
      <Arrow up={up} color="#333" />
    </div>
  );
}

function Rule({ children, className, last }: { children: ReactNode; className: string; last?: boolean }) {
  return (
    <div className={`relative flex items-start rounded-[5px] border border-[#eee] bg-white/90 pl-[10px] pr-[5px] pt-[5px] ${className}`}>
      <span className={`absolute -left-[9px] h-[2px] w-[8px] bg-[#ccc] ${last ? "top-[21px]" : className.includes("52") ? "top-[26px]" : "top-[21px]"}`} />
      {children}
      <div className="ml-auto">
        <Delete />
      </div>
    </div>
  );
}

function TagRule({ tag, selectClass, boxGap, chipClass }: { tag: string; selectClass: string; boxGap: string; chipClass: string }) {
  return (
    <Rule className="h-[52px]">
      <div className="pt-[10px]">
        <SortIcon />
      </div>
      <Select text="Country" className={`ml-[9px] mt-[9px] ${selectClass}`} />
      <span className="ml-[10px] mr-px mt-[8px] text-[14px] leading-[20px]">in</span>
      <span className={`h-[40px] w-px bg-[#ddd] ${boxGap}`} />
      <div className="ml-[5px] h-[34px] w-[194px] rounded-[4px] border border-[#ccc] bg-white pl-[9px] pt-[5px]">
        <div className={`flex h-[22px] items-center justify-between whitespace-nowrap rounded-[2px] bg-[#efefef] pb-[2px] pl-[3px] pr-[3px] text-[14px] leading-[18px] tracking-[0.2px] ${chipClass}`}>
          {tag}
          <span className="mt-px text-[16px]">×</span>
        </div>
      </div>
    </Rule>
  );
}

function TextRule({ field, value, up, selectClass, caret, last }: { field: string; value: string; up?: boolean; selectClass: string; caret?: boolean; last?: boolean }) {
  return (
    <Rule className="h-[46px]" last={last}>
      <div className="pt-[7px]">
        <SortIcon />
      </div>
      <Select text={field} up={up} className={`ml-[9px] mt-[6px] ${selectClass}`} />
      <Select text="matches across words" up={up} className="ml-[10px] mt-[6px] w-[220px]" />
      <span className="ml-[9px] h-[34px] w-px bg-[#ddd]" />
      <div className="ml-[5px] flex h-[34px] w-[624px] items-center rounded-[4px] border border-[#ccc] bg-white pb-[2px] pl-[2px] text-[14px] tracking-[0.2px] text-[#555] shadow-[inset_0_1px_1px_rgba(0,0,0,.075)]">
        {caret && <span className="-mr-px mt-[2px] h-[13px] w-px bg-[#333]" />}
        {value}
      </div>
    </Rule>
  );
}

function Group({ children, height, stem }: { children: ReactNode; height: string; stem: string }) {
  return (
    <div className={`relative rounded-[5px] border border-[#dcc896] bg-[#fbf2de] px-[10px] pt-[10px] ${height}`}>
      <span className={`absolute left-[16px] top-[32px] w-[2px] bg-[#ccc] ${stem}`} />
      <GroupHead active="AND" sub />
      <div className="flex flex-col gap-[4px] pl-[15px] pt-[10px]">{children}</div>
    </div>
  );
}

function QueryBuilder() {
  return (
    <div className="relative h-[420px] rounded-[5px] border border-[#dcc896] bg-[#fdf6e8] px-[10px] pt-[10px]">
      <GroupHead active="OR" />
      <span className="absolute left-[16px] top-[32px] h-[298px] w-[9px] rounded-bl-[4px] border-b-2 border-l-2 border-[#ccc]" />
      <span className="absolute left-[16px] top-[145px] h-[2px] w-[9px] bg-[#ccc]" />
      <div className="flex flex-col gap-[4px] pl-[15px] pt-[10px]">
        <Group height="h-[206px]" stem="h-[139px]">
          <TagRule tag="Gästrikland (Gs)" selectClass="w-[293px]" boxGap="ml-[9px]" chipClass="w-[135px]" />
          <TextRule field="Transliterated runic text" value="a" selectClass="w-[293px]" />
          <TextRule field="Normalization to Old West Norse" value="ei" selectClass="w-[293px]" last />
        </Group>
        <Group height="h-[156px]" stem="h-[89px]">
          <TagRule tag="Öland (Öl)" selectClass="w-[276px]" boxGap="ml-[9px]" chipClass="w-[96px]" />
          <TextRule field="Normalisation to Old Scandinavian" value="þenna" up caret selectClass="w-[276px]" last />
        </Group>
      </div>
    </div>
  );
}

const symbols: [string, number][] = [
  ["ö", 34.4], ["Ö", 34.2], ["å", 34.4], ["Å", 32.8], ["ä", 34.6], ["Ä", 34], ["þ", 34.6], ["ñ", 32.8], ["ð", 34.4],
  ["ï", 28.2], ["æ", 37.8], ["Æ", 35.8], ["ø", 36.4], ["Ø", 33.4], ["œ", 40], ["Œ", 37.2], ["ô", 35], ["Ô", 36.5],
];

export default function App() {
  return (
    <div className="flex h-[1160px] w-[1920px] flex-col overflow-hidden border-x border-b border-[#1883d7] bg-white font-['Noto_Sans',sans-serif] text-[#333]">
      <TitleBar />
      <Toolbar />
      <div className="flex grow">
        <div className="w-[1901px]">
          <div className="flex h-[477px] overflow-hidden border-b border-[#ddd]">
            <TreePanel />
            <InfoPanel />
            <MapPanel />
          </div>
          <p className="ml-[10px] mt-[14px] text-[14px] leading-[20px] tracking-[0.36px]">20 inscriptions, 32 words, 7 personal names.</p>
          <div className="mt-[21px] flex h-[34px] items-center text-[14px]">
            <div className="flex w-[332px] items-center pt-[2px] tracking-[0.3px]">
              <span className="flex h-[16px] w-[16px] items-center justify-center rounded-[2px] border border-[#bbb]">
                <svg width="10" height="8" viewBox="0 0 10 8" fill="none">
                  <path d="M.800 4L3.700 6.800L9.200 1" stroke="#444" strokeWidth="2.400" />
                </svg>
              </span>
              <span className="ml-[9px]">Apply filter(s)</span>
            </div>
            <div className="flex h-[34px] rounded-[4px] border border-[#ccc] pb-px text-center leading-[30px] tracking-[0.23px]">
              <div className="w-[209px] border-r border-[#ccc]">Show display format dialog</div>
              <div className="w-[89px]">Hide map</div>
            </div>
          </div>
          <div className="mt-[6px] flex h-[34px] items-center text-[14px]">
            <div className="w-[332px] pb-[3px] tracking-[0.33px]">Copy symbols to clipboard:</div>
            <div className="flex h-[34px] items-center rounded-[4px] bg-[#ddd] pb-[3px]">
              {symbols.map(([s, w]) => (
                <span key={s} className="text-center" style={{ width: w }}>
                  {s}
                </span>
              ))}
            </div>
          </div>
          <div className="mt-[24px]">
            <QueryBuilder />
          </div>
        </div>
        <div className="flex w-[17px] flex-col items-center bg-[#f1f1f1] pb-[7px] pt-[7px]">
          <Arrow up />
          <div className="mt-[67px] h-[895px] w-[13px] bg-[#c1c1c1]" />
          <div className="mt-auto">
            <Arrow />
          </div>
        </div>
      </div>
    </div>
  );
}
